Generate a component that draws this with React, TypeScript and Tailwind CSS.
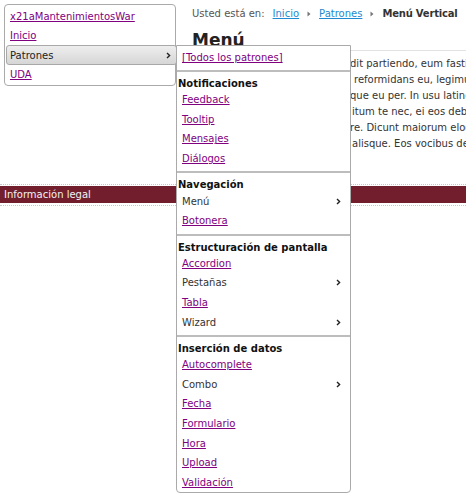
import React from 'react';

type Item = { label: string; link?: boolean; sub?: boolean };

const sections: { title: string; items: Item[] }[] = [
  {
    title: 'Notificaciones',
    items: [
      { label: 'Feedback', link: true },
      { label: 'Tooltip', link: true },
      { label: 'Mensajes', link: true },
      { label: 'Diálogos', link: true },
    ],
  },
  {
    title: 'Navegación',
    items: [
      { label: 'Menú', sub: true },
      { label: 'Botonera', link: true },
    ],
  },
  {
    title: 'Estructuración de pantalla',
    items: [
      { label: 'Accordion', link: true },
      { label: 'Pestañas', sub: true },
      { label: 'Tabla', link: true },
      { label: 'Wizard', sub: true },
    ],
  },
  {
    title: 'Inserción de datos',
    items: [
      { label: 'Autocomplete', link: true },
      { label: 'Combo', sub: true },
      { label: 'Fecha', link: true },
      { label: 'Formulario', link: true },
      { label: 'Hora', link: true },
      { label: 'Upload', link: true },
      { label: 'Validación', link: true },
    ],
  },
];

// text lines of the article, only the part right of the menu is visible
const lines = [
  { pad: 'pl-[158px]', text: 'dit partiendo, eum fastidii simul' },
  { pad: 'pl-[162px]', text: 'reformidans eu, legimus graecis' },
  { pad: 'pl-[158px]', text: 'que eu per. In usu latine' },
  { pad: 'pl-[160px]', text: 'itum te nec, ei eos debet' },
  { pad: 'pl-[158px]', text: 're. Dicunt maiorum eloquentiam' },
  { pad: 'pl-[160px]', text: 'alisque. Eos vocibus definiebas' },
];

function Chevron() {
  return (
    <svg width="5" height="7" viewBox="0 0 5 7" className="shrink-0">
      <path d="M1 1l2.6 2.5L1 6" fill="none" stroke="#222" strokeWidth="1.4" />
    </svg>
  );
}

function Crumb() {
  return (
    <svg width="4" height="6" viewBox="0 0 4 6" className="ml-[8px] mr-[8px] inline-block">
      <path d="M0.5 0.5L3.5 3L0.5 5.5Z" fill="#777" />
    </svg>
  );
}

export default function App() {
  return (
    <div className="relative h-[497px] w-[466px] overflow-hidden bg-white font-['DejaVu_Sans',Verdana,sans-serif] text-[10px] text-[#333]">
      <div className="flex h-[184px]">
        <div className="w-[192px] shrink-0 pl-[4px] pt-[4px]">
          <div className="w-[172px] rounded-[4px] border border-[#aaa] pb-[1px] pt-[2px]">
            <div className="h-[19px] px-[5px] leading-[19px]">
              <a className="text-[#800080] underline">x21aMantenimientosWar</a>
            </div>
            <div className="h-[19px] px-[5px] leading-[19px]">
              <a className="text-[#800080] underline">Inicio</a>
            </div>
            <div className="-mr-[2px] ml-[1px] flex h-[20px] items-center justify-between rounded-[3px] border border-[#a8a8a8] bg-gradient-to-b from-[#eeeeee] to-[#d6d6d6] pl-[3px] pr-[5px] text-[#222]">
              <span>Patrones</span>
              <Chevron />
            </div>
            <div className="h-[19px] px-[5px] leading-[19px]">
              <a className="text-[#800080] underline">UDA</a>
            </div>
          </div>
        </div>
        <div className="min-w-0 flex-1 overflow-hidden whitespace-nowrap">
          <div className="mt-[6px] flex items-center leading-[16px] text-[#555]">
            <span className="mr-[8px]">Usted está en:</span>
            <a className="text-[#1d8ad1] underline">Inicio</a>
            <Crumb />
            <a className="text-[#1d8ad1] underline">Patrones</a>
            <Crumb />
            <span className="font-bold tracking-[-0.2px] text-[#333]">Menú Vertical</span>
          </div>
          <h1 className="mt-[8px] h-[21px] border-b border-[#e2e2e2] text-[17px] font-bold leading-[20px] text-[#222]">
            Menú
          </h1>
          <div className="mt-[5px]">
            {lines.map((l) => (
              <div key={l.text} className={`${l.pad} leading-[16px]`}>
                {l.text}
              </div>
            ))}
          </div>
        </div>
      </div>

      <div className="border-t border-dotted border-[#c8c8c8]" />
      <div className="mt-[1px] h-[17px] bg-[#731e2d] px-[4px] leading-[17px] text-[#f2f2f2]">
        Información legal
      </div>
      <div className="mt-[2px] border-t border-dotted border-[#c8c8c8]" />

      <div className="absolute left-[176px] top-[45px] w-[175px] rounded-b-[4px] border border-[#aaa] bg-white">
        <div className="h-[21px] px-[5px] pt-[2px] leading-[20px]">
          <a className="text-[#800080] underline">[Todos los patrones]</a>
        </div>
        <div className="h-[3px]" />
        {sections.map((s) => (
          <div key={s.title} className="border-t-2 border-[#bdbdbd] pb-[3px] last:pb-0">
            <div className="px-[1px] pt-[6px] font-bold leading-[12px] text-[#111]">{s.title}</div>
            {s.items.map((it) => (
              <div
                key={it.label}
                className="flex h-[19.6px] items-center justify-between pl-[5px] pr-[9px]"
              >
                {it.link ? (
                  <a className="text-[#800080] underline">{it.label}</a>
                ) : (
                  <span className="text-[#333]">{it.label}</span>
                )}
                {it.sub && <Chevron />}
              </div>
            ))}
          </div>
        ))}
      </div>
    </div>
  );
}
